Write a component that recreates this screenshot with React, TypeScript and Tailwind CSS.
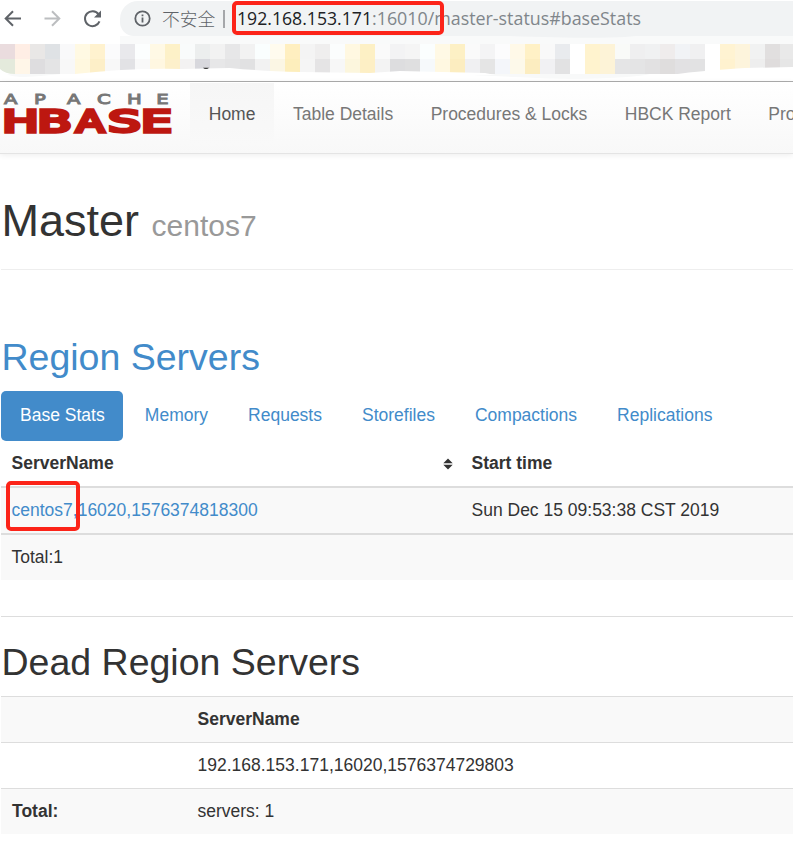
import React from 'react';

const mosaicTop =
  'eadcde ffeee5 e9e7e6 dfe2e5 f9f9fa fff9e3 fff2cf fbfbfc e9e9ec fcfefe fff9e5 fdf1c8 f9fbfb eceeee f2f2f2 e7e7e8 f2f2f2 fafefe fffbee ffefc0 f4f4f4 efeeee fbfdfd fff8e1 fdf0c5 fafafa f3f3f4 f5f5f5 fbfefe fff9e5 fdf0c5 fafafa f4f4f5 fcfcfd fff9e8 fff1c6 f9f9f9 e9ebee ffffff fff3ce fdf3d7 f9faf8 efeff0 f0f1f2 efecec f1f3f6 f0f0f1 ffffff fff3d2 fdf4dc f1f2f2 e1dfdf e9e9e9'.split(' ');
const mosaicBottom =
  'e4eadc fff6e8 dedddf e4e4e5 f8f8f8 fff8df fdefc8 f8f8f8 e2e2e5 f9f9f9 fff7e1 fdf0cb f3f2f2 d8d8dd e7e7e8 e4e4e5 e1e1e2 f2f2f2 fbf6e4 fdeebc f5f5f5 e5e4e5 f7f7f7 fcf6dd fdefc5 f3f3f3 dddddf dfdfe0 f6f9fb fff8e1 fcedc0 f0f0f2 e5e5e5 f4f6fa fdf9ea fcedc0 f1f1f3 e2e2e3 ffffff fff3ce fdf3d7 e5e5e6 e4e4e5 e2e1e2 dfdddd e2e1e3 e2e2e3 ffffff fff2cf fdf4dc eeeeee dfdcdc e6e6e6'.split(' ');

function Bookmarks() {
  return (
    <svg width="793" height="45" viewBox="0 36 793 45" className="block shrink-0">
      <path d="M120 29 H793 V44 H120Z" fill="#f9fafa" />
      <path d="M440 36 H725 Q660 33 625 37 Q590 39 510 36Z" fill="#f1f3f4" />
      <path d="M0 69 Q5 77 25 77 Q55 75 90 71 L180 70 L440 73 Q520 78 575 79 Q635 78 650 74 L705 70 L793 67 V60 H0Z" fill="#f8f9f9" />
      {mosaicTop.map((c, i) => (
        <rect key={i} x={i * 15} y="44" width="15" height="15" fill={'#' + c} />
      ))}
      {mosaicBottom.map((c, i) => (
        <rect key={i} x={i * 15} y="59" width="15" height="15" fill={'#' + c} />
      ))}
      <path d="M0 69 Q5 74 15 74 L0 75Z M75 74 Q130 68 180 69 L230 68 Q260 71 300 72 L370 73 L400 71 L485 73 L495 75 H75Z M670 75 Q690 72 705 71 Q730 69 745 68 L793 67 V75Z" fill="#fff" />
      <path d="M203 67.7 h6 q-1 1.4-3 1.4 t-3-1.4Z" fill="#333" />
    </svg>
  );
}

function BrowserBar() {
  return (
    <div className="h-[82px] border-b border-[#adadad] bg-white">
      <div className="flex h-9 items-center">
        <svg width="120" height="36" viewBox="0 0 120 36" fill="none" className="shrink-0" strokeWidth="2">
          <path d="M21 18.5 H6 M13 11.2 L5.7 18.5 L13 25.8" stroke="#5f6368" />
          <path d="M44.500 18.500 H59 M52 11.200 L59.300 18.500 L52 25.800" stroke="#bcbec0" />
          <path d="M98.600 14.300 A7.500 7.500 0 1 0 99.500 21.400" stroke="#5f6368" />
          <path d="M101 10.500 V17.500 H94Z" fill="#5f6368" />
        </svg>
        <div className="mt-px flex h-[35px] flex-1 items-center overflow-hidden rounded-tl-[18px] rounded-bl-[14px] bg-[#f1f3f4] pl-[14px]">
          <svg width="17" height="17" viewBox="0 0 17 17" className="shrink-0">
            <circle cx="8.500" cy="8.500" r="7.200" fill="none" stroke="#5f6368" strokeWidth="1.800" />
            <path d="M7.600 7.500h1.800v5H7.600zM7.600 4.400h1.800v1.800H7.600z" fill="#5f6368" />
          </svg>
          <span className="-mt-[2px] ml-[11px] w-[55px] whitespace-nowrap text-[17.8px] leading-6 font-light text-[#5f6368] [font-family:'Noto_Sans_CJK_SC',sans-serif]">不安全</span>
          <span className="ml-[6px] h-[18px] w-[2px] bg-[#a5a7aa]" />
          <svg width="420" height="28" viewBox="0 0 420 28" className="ml-[12px] shrink-0 [font-family:'Open_Sans',sans-serif]" fontSize="18.500">
            <text x="0" y="20" textLength="135" lengthAdjust="spacingAndGlyphs" fill="#202124">192.168.153.171</text>
            <text x="135" y="20" textLength="269" lengthAdjust="spacingAndGlyphs" fill="#80868b">:16010/master-status#baseStats</text>
          </svg>
        </div>
      </div>
      <Bookmarks />
    </div>
  );
}

const wordmark = [
  { letter: 'H', x: 2.2, scale: 1.62 },
  { letter: 'B', x: 37.2, scale: 1.68 },
  { letter: 'A', x: 76, scale: 1.38 },
  { letter: 'S', x: 108.2, scale: 1.7 },
  { letter: 'E', x: 141, scale: 1.63 },
];

const topLetters = [
  { letter: 'A', x: 4 },
  { letter: 'P', x: 34 },
  { letter: 'A', x: 67 },
  { letter: 'C', x: 97 },
  { letter: 'H', x: 127 },
  { letter: 'E', x: 156.3 },
];

function Logo() {
  return (
    <svg width="190" height="71" viewBox="0 82 190 71" className="shrink-0 [font-family:'DejaVu_Sans',sans-serif]">
      {topLetters.map(({ letter, x }) => (
        <text key={x} transform={`translate(${x} 104.300) scale(1.350 1)`} fontSize="14.500" fill="#777" stroke="#777" strokeWidth="1">
          {letter}
        </text>
      ))}
      {wordmark.map(({ letter, x, scale }) => (
        <text key={letter} transform={`translate(${x} 132) scale(${scale} 1)`} fontSize="30" fill="#bd1710" stroke="#bd1710" strokeWidth="3.400" strokeLinejoin="miter">
          {letter}
        </text>
      ))}
    </svg>
  );
}

const navItems = ['Table Details', 'Procedures & Locks', 'HBCK Report', 'Process Metrics'];
const tabs = ['Memory', 'Requests', 'Storefiles', 'Compactions', 'Replications'];

export default function App() {
  return (
    <div className="relative h-[841px] w-[793px] overflow-hidden bg-white text-[17.5px] leading-[25px] text-[#333] [font-family:'Liberation_Sans',Arial,sans-serif]">
      <BrowserBar />
      <nav className="flex h-[72px] overflow-hidden whitespace-nowrap border-b border-[#e4e4e4] bg-linear-to-b from-white to-[#f8f8f8] text-[#777] shadow-[0_1px_6px_rgba(0,0,0,0.075)]">
        <Logo />
        <a className="mt-px h-[62px] bg-linear-to-b from-[#f6f6f6] to-[#f9f9f9] px-[18.75px] pt-[18.500px] text-[#555]">Home</a>
        {navItems.map((item) => (
          <a key={item} className="px-[18.75px] pt-[19.500px]">{item}</a>
        ))}
      </nav>

      <main className="pl-px">
        <header className="h-[116px] border-b border-[#eee] pt-[42px]">
          <h1 className="pl-[0.500px] text-[45px] leading-[50px]">
            Master <small className="text-[30px] text-[#999]">centos7</small>
          </h1>
        </header>

        <section className="pt-[66px]">
          <h2 className="pl-[0.500px] text-[37.5px] leading-[42px] text-[#428bca]">Region Servers</h2>
          <div className="mt-[13px] flex h-[50px] gap-[2.5px] text-[#428bca]">
            <a className="mr-[0.600px] w-[122px] rounded-[5px] bg-[#428bca] pl-[19px] pt-[11.500px] text-white">Base Stats</a>
            {tabs.map((tab) => (
              <a key={tab} className="px-[18.75px] pt-[11.500px]">{tab}</a>
            ))}
          </div>
          <div className="grid grid-cols-[460px_1fr]">
            <div className="flex h-[47px] items-center border-b-2 border-[#ddd] pr-[8px] pl-[10.500px] font-bold">
              <span className="flex-1 -mt-px">ServerName</span>
              <svg width="10" height="12" viewBox="0 0 10 12" fill="#333">
                <path d="M5 0.500 L9.700 5.200 H.300Z M.300 6.800 H9.700 L5 11.500Z" />
              </svg>
            </div>
            <div className="h-[47px] border-b-2 border-[#ddd] pt-[9.500px] pl-[10.500px] font-bold">Start time</div>
            <div className="h-[47px] border-b-2 border-[#ddd] bg-[#f9f9f9] pt-[10px] pl-[10.500px] text-[#428bca]">centos7,16020,1576374818300</div>
            <div className="h-[47px] border-b-2 border-[#ddd] bg-[#f9f9f9] pt-[10px] pl-[10.500px]">Sun Dec 15 09:53:38 CST 2019</div>
            <div className="col-span-2 h-[45px] bg-[#f9f9f9] pt-[9.500px] pl-[10.500px]">Total:1</div>
          </div>
        </section>

        <section className="mt-[36px] border-t border-[#ddd] pt-[24px]">
          <h2 className="pl-[0.500px] text-[37.5px] leading-[42px]">Dead Region Servers</h2>
          <div className="mt-[13px] grid grid-cols-[186px_1fr]">
            <div className="h-[46px] border-t border-[#ddd] bg-[#f9f9f9]" />
            <div className="h-[46px] border-t border-[#ddd] bg-[#f9f9f9] pt-[9.500px] pl-[10.500px] font-bold">ServerName</div>
            <div className="h-[46px] border-t border-[#ddd]" />
            <div className="h-[46px] border-t border-[#ddd] pt-[9.500px] pl-[10.500px]">192.168.153.171,16020,1576374729803</div>
            <div className="h-[46px] border-t border-[#ddd] bg-[#f9f9f9] pt-[9.500px] pl-[11px] font-bold">Total:</div>
            <div className="h-[46px] border-t border-[#ddd] bg-[#f9f9f9] pt-[9.500px] pl-[10.500px]">servers: 1</div>
          </div>
        </section>
      </main>

      <div className="absolute top-px left-[232px] h-[34px] w-[212px] rounded-[5px] border-4 border-[#fc2419]" />
      <div className="absolute top-[481px] left-[6px] h-[50px] w-[74px] rounded-[5px] border-4 border-[#fc2419]" />
    </div>
  );
}
